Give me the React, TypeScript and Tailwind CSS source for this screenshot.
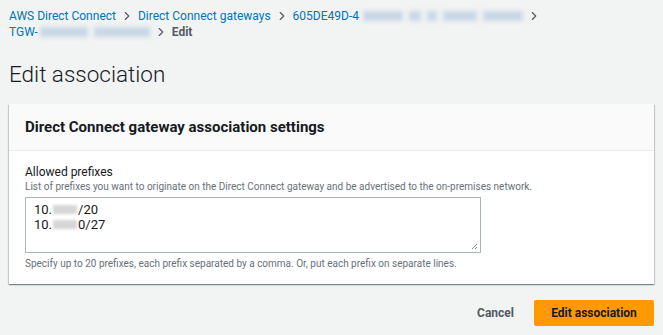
import { ChevronRight } from "lucide-react";

const font = { fontFamily: "Roboto, 'Noto Sans', sans-serif" };

function Crumb({ children }: { children: React.ReactNode }) {
  return <span className="text-[#0073bb]">{children}</span>;
}

function Sep() {
  return <ChevronRight className="mx-[4px] h-[14px] w-[14px] text-[#545b64]" strokeWidth={2} />;
}

function Blur({ w }: { w: string }) {
  return <span className={`inline-block h-[10px] ${w} bg-[#c9d8e6] blur-[2px]`} />;
}

export default function App() {
  return (
    <div className="min-h-screen bg-[#f2f3f3] text-[#16191f]" style={font}>
      <div className="px-[9px] pt-[8px]">
        {/* breadcrumbs */}
        <div className="flex flex-wrap items-center text-[12px] leading-[16px]">
          <Crumb>AWS Direct Connect</Crumb>
          <Sep />
          <Crumb>Direct Connect gateways</Crumb>
          <Sep />
          <span className="flex items-center">
            <Crumb>605DE49D-4</Crumb>
            <span className="ml-[4px] flex items-center gap-[6px]">
              <Blur w="w-[40px]" />
              <Blur w="w-[12px]" />
              <Blur w="w-[10px]" />
              <Blur w="w-[34px]" />
              <Blur w="w-[40px]" />
            </span>
          </span>
          <Sep />
        </div>
        <div className="flex items-center text-[12px] leading-[16px]">
          <Crumb>TGW-</Crumb>
          <span className="ml-[2px] flex items-center gap-[6px]">
            <Blur w="w-[48px]" />
            <Blur w="w-[56px]" />
          </span>
          <Sep />
          <span className="font-bold text-[#545b64]">Edit</span>
        </div>

        <h1 className="mt-[20px] text-[22.5px] font-light leading-[28px]">Edit association</h1>

        {/* card */}
        <div className="mt-[16px] bg-white shadow-[0_1px_1px_0_rgba(0,28,36,0.3),1px_1px_1px_0_rgba(0,28,36,0.15),-1px_1px_1px_0_rgba(0,28,36,0.15)]">
          <div className="flex h-[47px] items-center border-b border-[#eaeded] bg-[#fafafa] px-[16px]">
            <h2 className="text-[15px] font-bold">Direct Connect gateway association settings</h2>
          </div>
          <div className="px-[16px] pb-[13px] pt-[13px]">
            <div className="text-[12px] leading-[16px]">Allowed prefixes</div>
            <div className="text-[10px] leading-[14px] text-[#687078]">
              List of prefixes you want to originate on the Direct Connect gateway and be advertised to the on-premises network.
            </div>
            <div className="relative mt-[3px] h-[56px] w-[456px] border border-[#aab7b8] bg-white px-[8px] py-[4px] text-[13px] leading-[15px]">
              <div className="flex items-center">
                10.<span className="mx-[1px] inline-block h-[9px] w-[24px] bg-[#d6d6d6] blur-[1.5px]" />/20
              </div>
              <div className="flex items-center">
                10.<span className="mx-[1px] inline-block h-[9px] w-[24px] bg-[#d6d6d6] blur-[1.5px]" />0/27
              </div>
              <svg className="absolute bottom-[2px] right-[2px]" width="7" height="7" viewBox="0 0 7 7">
                <path d="M6 1L1 6M6 4L4 6" stroke="#888" strokeWidth="1" />
              </svg>
            </div>
            <div className="mt-[4px] text-[10px] leading-[14px] text-[#687078]">
              Specify up to 20 prefixes, each prefix separated by a comma. Or, put each prefix on separate lines.
            </div>
          </div>
        </div>

        {/* actions */}
        <div className="mt-[16px] flex items-center justify-end gap-[18px]">
          <button className="px-[2px] text-[12px] font-bold text-[#545b64]">Cancel</button>
          <button className="h-[26px] w-[120px] rounded-[2px] bg-[#ff9900] text-[12px] font-bold text-[#16191f]">
            Edit association
          </button>
        </div>
      </div>
    </div>
  );
}
